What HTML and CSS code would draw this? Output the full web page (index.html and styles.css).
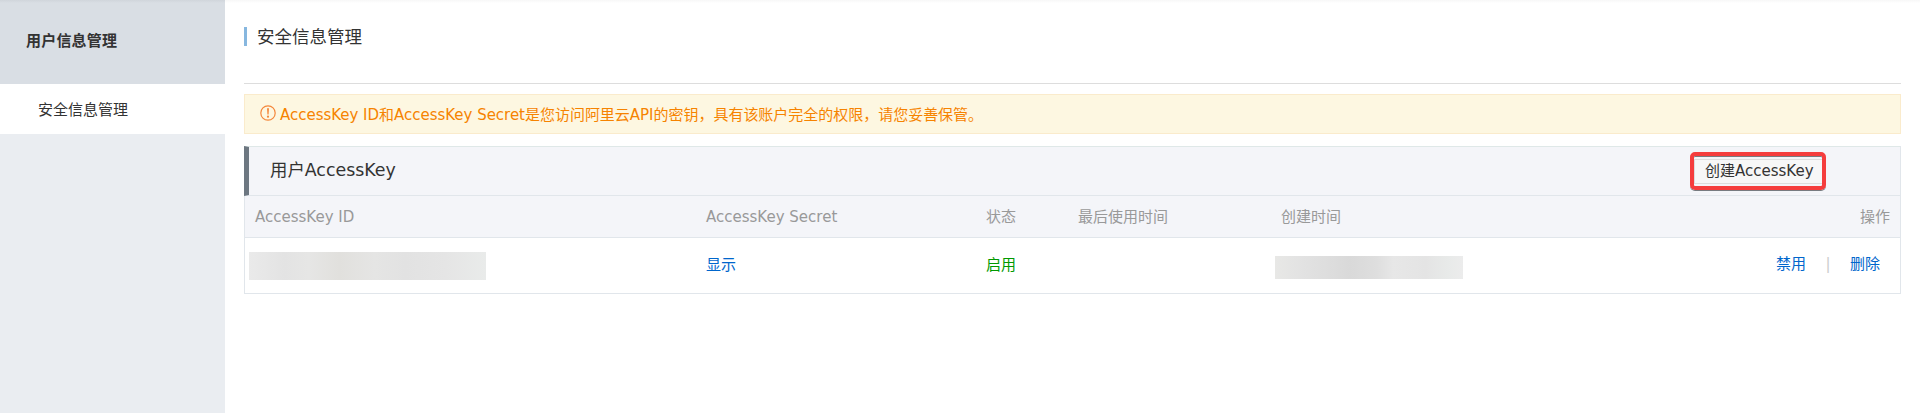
FILE: index.html
```html
<!DOCTYPE html>
<html lang="zh-CN">
<head>
<meta charset="utf-8">
<title>安全信息管理</title>
<link rel="stylesheet" href="styles.css">
</head>
<body>
<aside class="sidebar">
  <div class="sidebar-title">用户信息管理</div>
  <a class="sidebar-item">安全信息管理</a>
</aside>
<main class="content">
  <header class="page-header"><h1 class="page-title">安全信息管理</h1></header>
  <div class="notice">
    <svg class="notice-icon" viewBox="0 0 16 16" width="16" height="16"><circle cx="8" cy="8" r="7.2" fill="none" stroke="currentColor" stroke-width="1.2"/><path d="M7 3.2h2l-.4 6.2H7.4z" fill="currentColor"/><circle cx="8" cy="11.7" r="1.1" fill="currentColor"/></svg>
    <span class="notice-text">AccessKey ID和AccessKey Secret是您访问阿里云API的密钥，具有该账户完全的权限，请您妥善保管。</span>
  </div>
  <section class="panel">
    <div class="panel-header">
      <h2 class="panel-title">用户AccessKey</h2>
      <div class="highlight"><button class="create">创建AccessKey</button></div>
    </div>
    <div class="row head">
      <span>AccessKey ID</span><span>AccessKey Secret</span><span>状态</span><span>最后使用时间</span><span>创建时间</span><span class="right">操作</span>
    </div>
    <div class="row data">
      <span><i class="mask mask-id"></i></span>
      <a class="link">显示</a>
      <span class="enabled">启用</span>
      <span></span>
      <span><i class="mask mask-time"></i></span>
      <span class="actions"><a class="link">禁用</a><i class="divider">|</i><a class="link">删除</a></span>
    </div>
  </section>
</main>
</body>
</html>
```
FILE: styles.css
```css
* { box-sizing: border-box; }
body {
  margin: 0;
  height: 413px;
  display: flex;
  overflow: hidden;
  background: linear-gradient(#f7f7f7, #fff 3px);
  color: #333;
  font: 15px/20px "DejaVu Sans", "Noto Sans CJK SC", sans-serif;
}
.sidebar { width: 225px; flex: none; background: #eaedf1; }
.sidebar-title {
  height: 84px;
  padding: 30px 0 0 26px;
  background: linear-gradient(#d0d5db, #d9dee4 3px);
  font-weight: bold;
  font-family: "Noto Sans CJK SC", sans-serif;
  letter-spacing: .2px;
}
.sidebar-item { display: block; height: 50px; padding: 16px 0 0 38px; background: #fff; }
.content { flex: 1; padding: 0 19px; }
.page-header { height: 84px; padding-top: 27px; border-bottom: 1px solid #ddd; }
.page-title {
  margin: 0;
  height: 19px;
  padding-left: 10px;
  border-left: 3px solid #87b7df;
  font-size: 17.5px;
  font-weight: normal;
  line-height: 21px;
}
.notice {
  display: flex;
  height: 40px;
  margin-top: 10px;
  padding: 10px 15px;
  gap: 4px;
  border: 1px solid #faebcc;
  background: #fdf7e1;
  color: #f68300;
}
.notice-icon { color: #f4873b; }
.notice-text { letter-spacing: -.02px; }
.panel { margin-top: 12px; border: 1px solid #e1e6eb; border-top: 0; }
.panel-header {
  display: flex;
  justify-content: space-between;
  height: 50px;
  margin-left: -1px;
  padding: 5px 74px 0 21px;
  border-top: 1px solid #dfe8e8;
  border-bottom: 1px solid #e1e6eb;
  border-left: 5px solid #6d7781;
  background: #f4f5f9;
}
.panel-title { margin: 8px 0 0; font-size: 17.4px; font-weight: normal; line-height: 20px; }
.highlight {
  width: 136px;
  height: 38px;
  padding-top: 3px;
  border: 4px solid #f53d3d;
  border-radius: 5px;
  box-shadow: 0 1px 0 #777b80, inset 0 1px 0 #777b80;
}
.create {
  display: block;
  width: 128px;
  height: 25px;
  padding: 0 0 2px 10px;
  border: 1px solid #ddd;
  border-right: 0;
  background: #f7f7f7;
  color: #333;
  font: inherit;
  line-height: 20px;
  text-align: left;
}
.row { display: grid; grid-template-columns: 451px 280px 92px 203px 1fr auto; padding-left: 10px; }
.head { height: 42px; padding-top: 11px; padding-right: 10px; border-bottom: 1px solid #e1e6eb; background: #f4f5f9; color: #999; }
.data { height: 55px; padding-top: 17px; padding-right: 20px; }
.link { color: #06c; }
.enabled { color: #090; }
.actions { display: flex; margin-top: -1px; }
.divider { width: 44px; text-align: center; font-style: normal; color: #ccc; }
.mask { display: block; }
.mask-id {
  width: 237px;
  height: 28px;
  margin: -3px 0 0 -6px;
  background: linear-gradient(90deg, #eaeaea, #e3e3e3 15%, #e6e6e5 25%, #e1e0dd 38%, #e5e5e4 53%, #e2e2e2 66%, #e5e5e5 83%, #e9ebea);
}
.mask-time {
  width: 188px;
  height: 23px;
  margin: 1px 0 0 -6px;
  background: linear-gradient(90deg, #e8e8e6, #e2e2e2 15%, #d9d9d9 40%, #dedede 54%, #e7e7e7 63%, #e4e4e4 80%, #e8eae9 92%, #ececec);
}
```
